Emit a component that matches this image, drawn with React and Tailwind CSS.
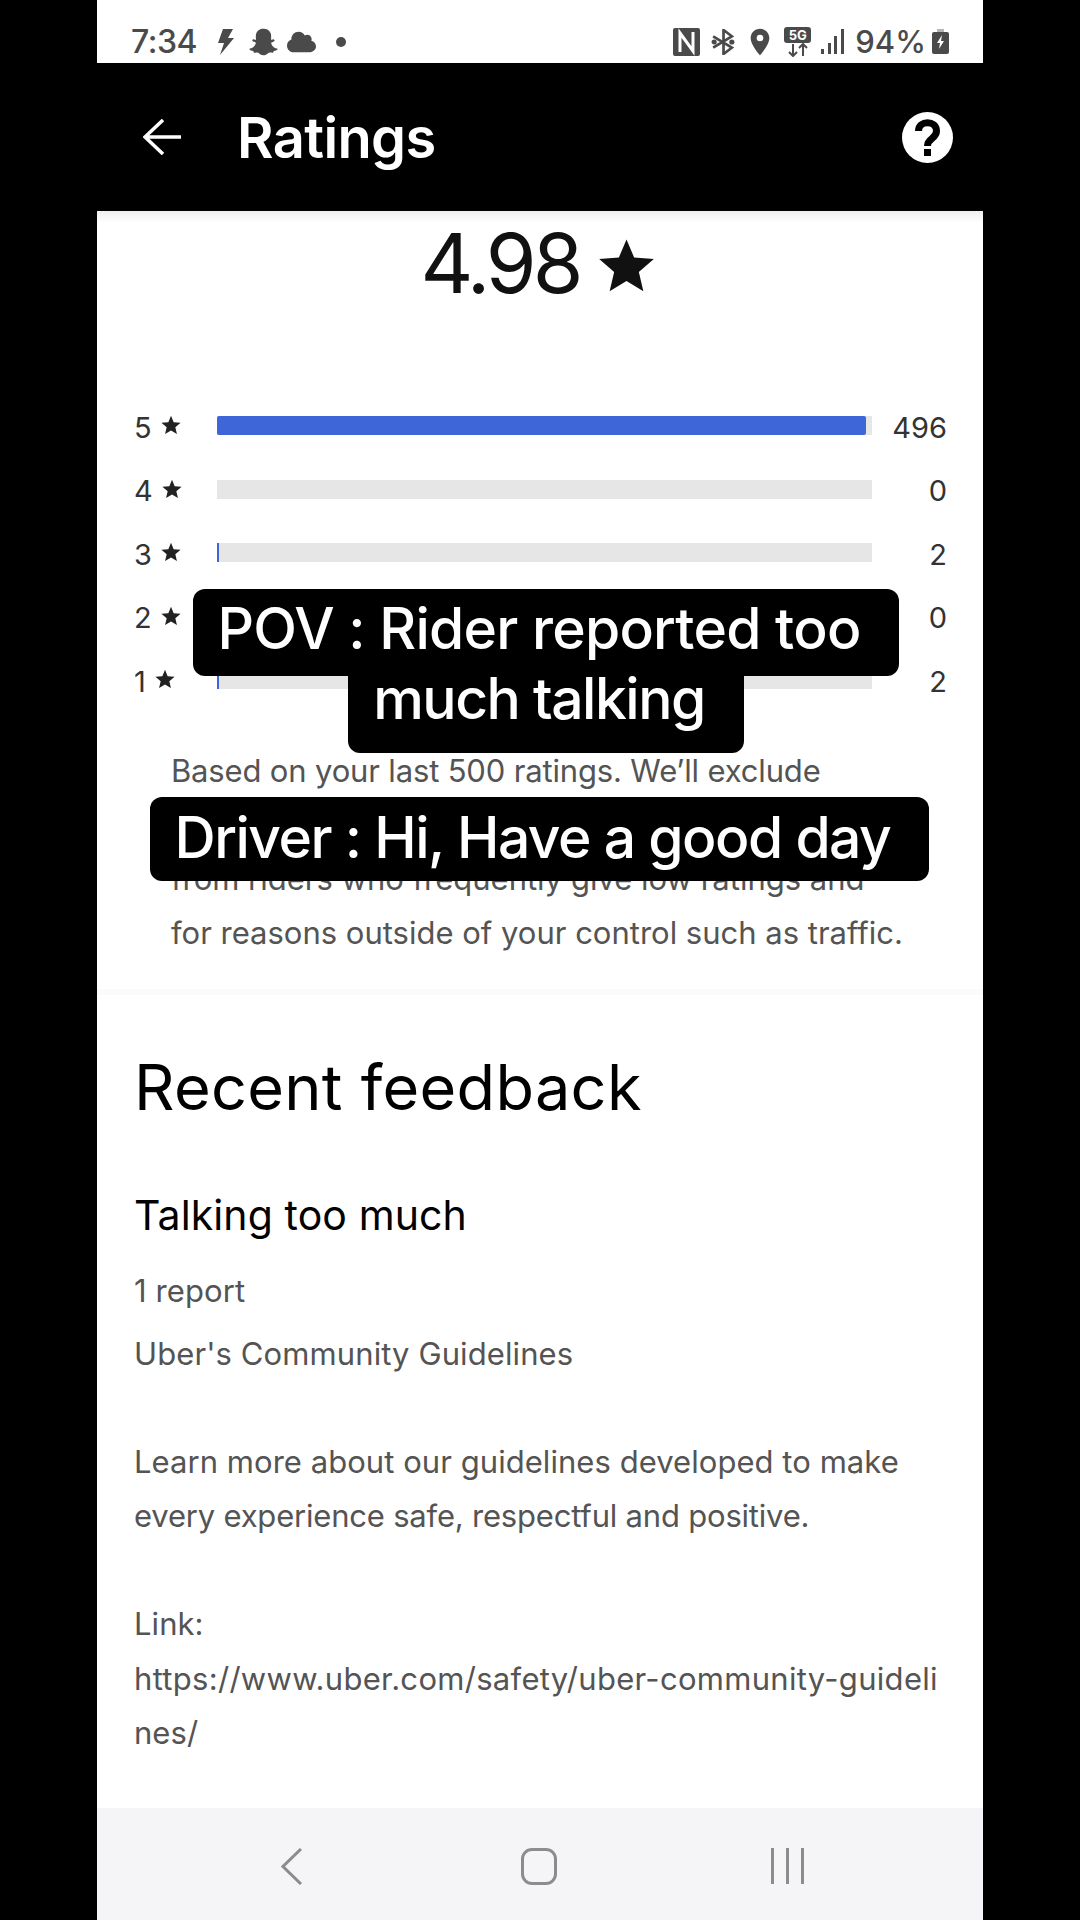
import { FaSnapchatGhost, FaCloud } from 'react-icons/fa';
import { MdLocationOn } from 'react-icons/md';

const rows = [
  { label: '5', count: '496', fill: 649, fillClass: 'bg-[#3f66d8] rounded-[2px]' },
  { label: '4', count: '0', fill: 0, fillClass: '' },
  { label: '3', count: '2', fill: 2, fillClass: 'bg-[#3f66d8]' },
  { label: '2', count: '0', fill: 0, fillClass: '' },
  { label: '1', count: '2', fill: 2, fillClass: 'bg-[#3f66d8]' },
];

const StatusBar = () => (
  <div className="relative h-[63px] bg-white text-[#4a4a4a] flex items-center pl-[34px] pr-[34px] pt-[20px] font-['Inter',sans-serif]">
    <span className="text-[32px] font-medium w-[85px] leading-none tracking-[-0.5px]">7:34</span>
    <svg className="w-[18px] h-[26px]" viewBox="0 0 18 26" fill="currentColor">
      <path d="M7 0h10l-5 9h6L4 26l4-12H2z" />
    </svg>
    <FaSnapchatGhost className="ml-[15px] w-[29px] h-[28px]" />
    <FaCloud className="ml-[9px] w-[29px] h-[24px]" />
    <div className="ml-[20px] w-[10px] h-[10px] rounded-full bg-[#4a4a4a]" />
    <div className="ml-auto flex items-center">
      <svg className="w-[27px] h-[28px]" viewBox="0 0 27 28">
        <rect width="27" height="28" rx="2" fill="currentColor" />
        <path d="M7 24V5l13 18V4" fill="none" stroke="#fff" strokeWidth="3" />
      </svg>
      <svg className="ml-[11px] w-[24px] h-[26px]" viewBox="0 0 23 25" fill="none" stroke="currentColor" strokeWidth="2.600">
        <path d="M2 7l18 11-8 6V1l8 6L2 18" />
        <circle cx="3" cy="12.500" r="1.200" />
        <circle cx="20" cy="12.500" r="1.200" />
      </svg>
      <MdLocationOn className="ml-[9px] w-[32px] h-[34px]" />
      <div className="ml-[8px] w-[27px] h-[30px] flex flex-col items-center">
        <div className="w-[27px] h-[16px] rounded-[3px] bg-[#4a4a4a] text-white text-[13px] font-bold leading-[16px] text-center">5G</div>
        <svg className="w-[22px] h-[14px]" viewBox="0 0 22 14" fill="none" stroke="currentColor" strokeWidth="2">
          <path d="M6 1v12M2 9l4 4 4-4M16 13V1M12 5l4-4 4 4" />
        </svg>
      </div>
      <svg className="ml-[10px] w-[23px] h-[25px]" viewBox="0 0 23 25" fill="currentColor">
        <rect x="0" y="20" width="3" height="5" />
        <rect x="7" y="14" width="3" height="11" />
        <rect x="13" y="7" width="3" height="18" />
        <rect x="20" y="0" width="3" height="25" />
      </svg>
      <span className="ml-[11px] text-[31px] font-medium leading-none">94%</span>
      <svg className="ml-[6px] w-[17px] h-[25px]" viewBox="0 0 17 25">
        <rect x="5" y="0" width="7" height="4" fill="#b5b5b5" />
        <rect x="0" y="3" width="17" height="22" rx="2" fill="currentColor" />
        <path d="M10 6l-5 8h3l-1 6 5-8H9z" fill="#fff" />
      </svg>
    </div>
  </div>
);

const Header = () => (
  <div className="h-[148px] bg-black flex items-center pl-[46px] pr-[30px] font-['Inter',sans-serif]">
    <svg className="w-[38px] h-[36px]" viewBox="0 0 38 36" fill="none" stroke="#fff" strokeWidth="3.500">
      <path d="M20 1L2 18l18 17M2 18h36" />
    </svg>
    <h1 className="ml-[56px] pt-[2px] text-[56px] leading-none font-semibold text-white tracking-[-0.6px]">Ratings</h1>
    <svg className="ml-auto w-[51px] h-[51px]" viewBox="0 0 51 51">
      <circle cx="25.500" cy="25.500" r="25.500" fill="#fff" />
      <path d="M16.500 19c0-11 18-11 18 0 0 8-9 7-9 15" fill="none" stroke="#000" strokeWidth="7" />
      <rect x="22" y="37" width="7" height="7" fill="#000" />
    </svg>
  </div>
);

const RatingRow = ({ row }) => (
  <div className="h-[63.5px] flex items-center">
    <div className="w-[83px] flex items-center text-[#333] text-[29px] leading-none pt-[3px]">
      <span>{row.label}</span>
      <svg className="ml-[9px] w-[20px] h-[20px] mb-[4px]" viewBox="0 0 24 24" fill="#222">
        <path d="M12 1l3.200 7.600 8.300.700-6.300 5.400 1.900 8.100L12 18.500l-7.100 4.300 1.900-8.100L.5 9.300l8.300-.700z" />
      </svg>
    </div>
    <div className="w-[655px] h-[19px] bg-[#e6e6e6]">
      {row.fill > 0 && <div className={`h-full ${row.fillClass}`} style={{ width: row.fill }} />}
    </div>
    <div className="flex-1 text-right text-[#333] text-[29px] leading-none pt-[3px]">{row.count}</div>
  </div>
);

const NavBar = () => (
  <div className="relative h-[112px] bg-[#f5f5f7] flex items-start pt-[40px] pl-[184px]">
    <svg className="w-[21px] h-[37px]" viewBox="0 0 21 37" fill="none" stroke="#8c8c8c" strokeWidth="3">
      <path d="M20 1L2 18.500 20 36" />
    </svg>
    <div className="ml-[219px] w-[36px] h-[37px] rounded-[11px] border-[3px] border-[#8c8c8c]" />
    <div className="ml-[214px] flex gap-[12px]">
      <div className="w-[3px] h-[36px] bg-[#8c8c8c]" />
      <div className="w-[3px] h-[36px] bg-[#8c8c8c]" />
      <div className="w-[3px] h-[36px] bg-[#8c8c8c]" />
    </div>
  </div>
);

export default function App() {
  return (
    <div className="w-[1080px] h-[1920px] bg-black overflow-hidden">
      <div className="relative w-[886px] h-[1920px] mx-auto flex flex-col bg-white font-['Inter',sans-serif]">
        <StatusBar />
        <Header />

        <main className="flex-1 overflow-hidden">
          <div className="h-[183px] pt-[15px] pr-[4px] flex justify-center text-[#111] bg-gradient-to-b from-[#efefef] to-white to-[12px]">
            <span className="text-[82px] leading-[76px] tracking-[-4px]">4.98</span>
            <svg className="ml-[19px] mt-[11px] w-[57px] h-[57px]" viewBox="0 0 24 24" fill="#111">
              <path d="M12 1l3.200 7.600 8.300.700-6.300 5.400 1.900 8.100L12 18.500l-7.100 4.300 1.900-8.100L.5 9.300l8.300-.700z" />
            </svg>
          </div>

          <section className="pl-[37px] pr-[36px]">
            {rows.map((row) => (
              <RatingRow key={row.label} row={row} />
            ))}
          </section>

          <p className="mt-[32px] pl-[74px] text-[31px] leading-[54px] text-[#545454] whitespace-nowrap">
            <span className="tracking-[-0.16px]">Based on your last 500 ratings. We’ll exclude</span>
            <br />
            &nbsp;
            <br />
            from riders who frequently give low ratings and
            <br />
            for reasons outside of your control such as traffic.
          </p>

          <div className="mt-[29px] h-[6px] bg-[#fbfbfb]" />

          <section className="pl-[37px] pt-[56px] whitespace-nowrap">
            <h2 className="text-[63px] leading-[72px] text-black tracking-[0.3px]">Recent feedback</h2>
            <h3 className="mt-[66px] text-[41px] leading-[52px] text-black tracking-[0.1px]">Talking too much</h3>
            <p className="mt-[23px] text-[31px] leading-[54px] text-[#545454] tracking-[0.1px]">1 report</p>
            <p className="mt-[9px] text-[31px] leading-[54px] text-[#545454] tracking-[0.1px]">Uber's Community Guidelines</p>
            <p className="mt-[54px] text-[31px] leading-[54.3px] text-[#545454] tracking-[0.05px]">
              Learn more about our guidelines developed to make
              <br />
              <span className="tracking-[-0.2px]">every experience safe, respectful and positive.</span>
              <br />
              <br />
              Link:
              <br />
              <span className="tracking-[0.3px]">https://www.uber.com/safety/uber-community-guideli</span>
              <br />
              nes/
            </p>
          </section>
        </main>

        <NavBar />

        {/* caption overlays */}
        <div className="absolute left-[96px] top-[589px] w-[706px] h-[87px] rounded-[12px] bg-black" />
        <div className="absolute left-[251px] top-[660px] w-[396px] h-[93px] rounded-[12px] bg-black" />
        <div className="absolute left-[96px] top-[594px] w-[692px] text-center text-white text-[57px] leading-[70px] font-medium whitespace-nowrap">
          <span className="tracking-[-0.75px]">POV : Rider reported too</span>
          <br />
          <span className="tracking-[-1.5px]">much talking</span>
        </div>
        <div className="absolute left-[53px] top-[797px] w-[779px] h-[84px] pr-[14px] pb-[2px] rounded-[12px] bg-black flex items-center justify-center text-white text-[57px] font-medium tracking-[-1.5px] whitespace-nowrap">
          Driver : Hi, Have a good day
        </div>
      </div>
    </div>
  );
}
